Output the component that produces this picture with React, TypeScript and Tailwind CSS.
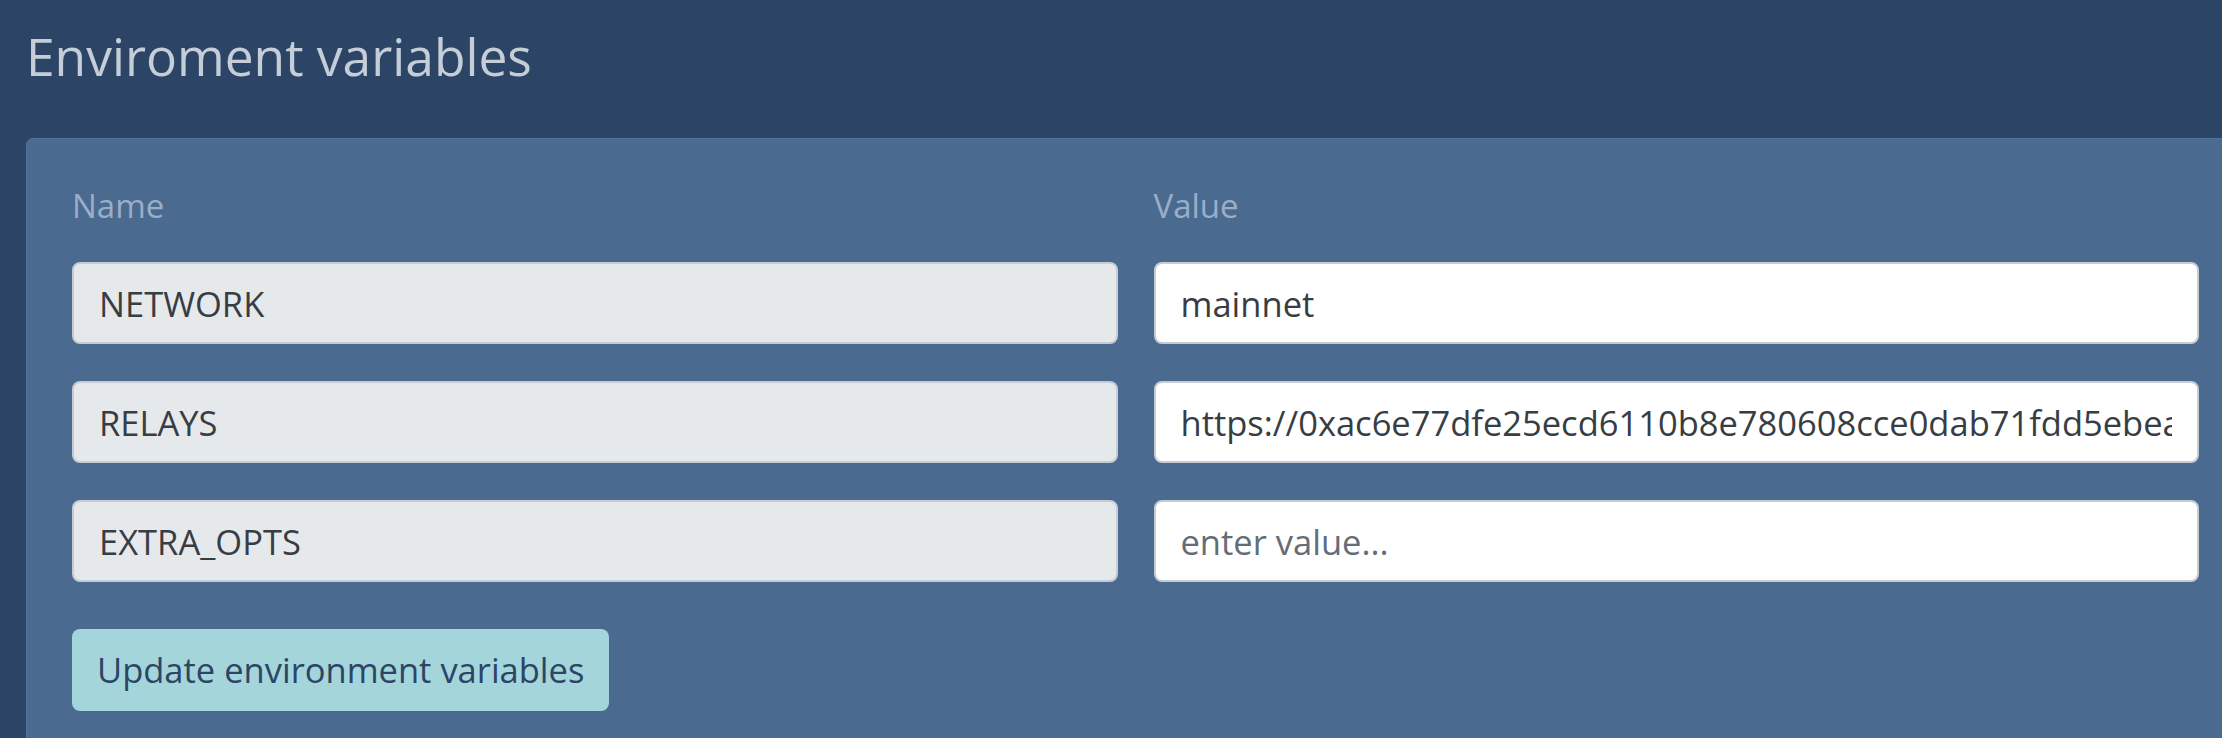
import React from "react";

const rows = [
  { name: "NETWORK", value: "mainnet" },
  {
    name: "RELAYS",
    value:
      "https://0xac6e77dfe25ecd6110b8e780608cce0dab71fdd5ebea22a16c0294c3f6c4f0d2@boost-relay.flashbots.net",
  },
  { name: "EXTRA_OPTS", value: "" },
];

export default function App() {
  return (
    <div className="min-h-screen w-full overflow-hidden bg-[#2c4566] font-['Open_Sans',sans-serif]">
      <div className="pl-[26px] pt-[25px]">
        <h2 className="text-[51.5px] leading-[62px] font-normal text-[#c4cdd8]">Enviroment variables</h2>

        <div className="mt-[51px] w-[2219px] rounded-[7px] border border-[#52719a] bg-[#4a6a90] p-[45px]">
          <div className="grid grid-cols-2 gap-x-[36px] pt-[1px]">
            <div className="text-[33px] leading-[42px] text-[#9aaec8]">Name</div>
            <div className="text-[33px] leading-[42px] text-[#9aaec8]">Value</div>
          </div>

          <div className="mt-[35px] grid grid-cols-2 gap-x-[36px] gap-y-[37px]">
            {rows.map((row) => (
              <React.Fragment key={row.name}>
                <input
                  readOnly
                  defaultValue={row.name}
                  className="h-[82px] w-full rounded-[8px] border-2 border-[#c6ccd4] bg-[#e6e9ec] px-[25px] text-[34.5px] text-[#383d44] outline-none"
                />
                <input
                  defaultValue={row.value}
                  placeholder="enter value..."
                  className="h-[82px] w-full rounded-[8px] border-2 border-[#c6ccd4] bg-white px-[25px] text-[34.5px] text-[#383d44] outline-none placeholder:text-[#646d77]"
                />
              </React.Fragment>
            ))}
          </div>

          <button className="mt-[47px] h-[82px] rounded-[8px] bg-[#a4d5da] px-[25px] text-[34.5px] text-[#2c4566]">
            Update environment variables
          </button>
        </div>
      </div>
    </div>
  );
}
